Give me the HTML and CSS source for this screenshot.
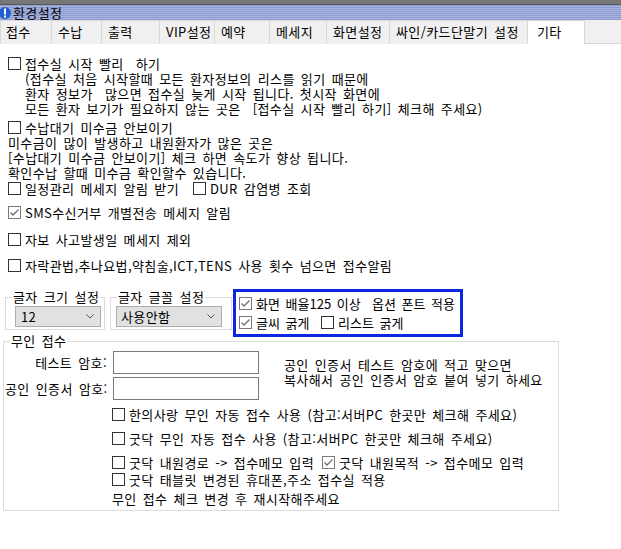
FILE: index.html
```html
<!DOCTYPE html>
<html lang="ko">
<head>
    <meta charset="UTF-8">
    <title>환경설정</title>
    <link rel="stylesheet" href="styles.css">
</head>
<body>
<div class="window">
    <div class="frame"></div>
    <div class="titlebar">
        <svg class="title-icon" viewBox="0 0 12 13" width="12" height="13">
            <circle cx="5" cy="7" r="6" fill="#1f5fd0"/>
            <rect x="4" y="2.5" width="2" height="6" fill="#fff"/>
            <rect x="4" y="9.5" width="2" height="2" fill="#fff"/>
        </svg>
        <span>환경설정</span>
    </div>

    <div class="tabs">
        <div class="tab first">접수</div>
        <div class="tab">수납</div>
        <div class="tab">출력</div>
        <div class="tab">VIP설정</div>
        <div class="tab">예약</div>
        <div class="tab">메세지</div>
        <div class="tab">화면설정</div>
        <div class="tab">싸인/카드단말기 설정</div>
        <div class="tab active">기타</div>
        <div class="tab-rest"></div>
    </div>

    <div class="page">
        <div class="check-row row-fast"><span class="cb"></span>접수실 시작 빨리&nbsp; 하기</div>
        <div class="note note-fast">
            (접수실 처음 시작할때 모든 환자정보의 리스를 읽기 때문에<br>
            환자 정보가&nbsp; 많으면 접수실 늦게 시작 됩니다. 첫시작 화면에<br>
            모든 환자 보기가 필요하지 않는 곳은&nbsp; [접수실 시작 빨리 하기] 체크해 주세요)
        </div>

        <div class="check-row row-unpaid"><span class="cb"></span>수납대기 미수금 안보이기</div>
        <div class="note note-unpaid">
            미수금이 많이 발생하고 내원환자가 많은 곳은<br>
            [수납대기 미수금 안보이기] 체크 하면 속도가 향상 됩니다.<br>
            확인수납 할때 미수금 확인할수 있습니다.
        </div>

        <div class="pair-row row-schedule">
            <div class="check-row"><span class="cb"></span>일정관리 메세지 알림 받기</div>
            <div class="check-row"><span class="cb"></span>DUR 감염병 조회</div>
        </div>
        <div class="check-row row-sms"><span class="cb on"><svg viewBox="0 0 11 11" width="11" height="11"><path d="M1.5 5.5 L4 8 L9.5 2.5" fill="none" stroke="#6e6e6e" stroke-width="1.3"/></svg></span>SMS수신거부 개별전송 메세지 알림</div>
        <div class="check-row row-accident"><span class="cb"></span>자보 사고발생일 메세지 제외</div>
        <div class="check-row row-count"><span class="cb"></span>자락관법,추나요법,약침술,ICT,TENS 사용 횟수 넘으면 접수알림</div>

        <div class="settings">
            <div class="group size-group">
                <span class="group-title">글자 크기 설정</span>
                <div class="combo"><span>12</span><svg viewBox="0 0 8 5" width="8" height="5"><path d="M0.5 0.5 L4 4 L7.5 0.5" fill="none" stroke="#555" stroke-width="1"/></svg></div>
            </div>
            <div class="group font-group">
                <span class="group-title">글자 글꼴 설정</span>
                <div class="combo"><span>사용안함</span><svg viewBox="0 0 8 5" width="8" height="5"><path d="M0.5 0.5 L4 4 L7.5 0.5" fill="none" stroke="#555" stroke-width="1"/></svg></div>
            </div>
            <div class="highlight">
                <div class="check-row"><span class="cb on"><svg viewBox="0 0 11 11" width="11" height="11"><path d="M1.5 5.5 L4 8 L9.5 2.5" fill="none" stroke="#6e6e6e" stroke-width="1.3"/></svg></span>화면 배율125 이상&nbsp; 옵션 폰트 적용</div>
                <div class="pair-row bold-row">
                    <div class="check-row"><span class="cb on"><svg viewBox="0 0 11 11" width="11" height="11"><path d="M1.5 5.5 L4 8 L9.5 2.5" fill="none" stroke="#6e6e6e" stroke-width="1.3"/></svg></span>글씨 굵게</div>
                    <div class="check-row"><span class="cb"></span>리스트 굵게</div>
                </div>
            </div>
        </div>

        <div class="group kiosk">
            <span class="group-title">무인 접수</span>
            <div class="auth">
                <label class="auth-label">테스트 암호:</label>
                <div class="input"></div>
                <div class="auth-note">공인 인증서 테스트 암호에 적고 맞으면<br>복사해서 공인 인증서 암호 붙여 넣기 하세요</div>
                <label class="auth-label">공인 인증서 암호:</label>
                <div class="input"></div>
            </div>
            <div class="check-row k1"><span class="cb"></span>한의사랑 무인 자동 접수 사용 (참고:서버PC 한곳만 체크해 주세요)</div>
            <div class="check-row k2"><span class="cb"></span>굿닥 무인 자동 접수 사용 (참고:서버PC 한곳만 체크해 주세요)</div>
            <div class="pair-row k3">
                <div class="check-row"><span class="cb"></span>굿닥 내원경로 -&gt; 접수메모 입력</div>
                <div class="check-row"><span class="cb on"><svg viewBox="0 0 11 11" width="11" height="11"><path d="M1.5 5.5 L4 8 L9.5 2.5" fill="none" stroke="#6e6e6e" stroke-width="1.3"/></svg></span>굿닥 내원목적 -&gt; 접수메모 입력</div>
            </div>
            <div class="check-row k4"><span class="cb"></span>굿닥 태블릿 변경된 휴대폰,주소 접수실 적용</div>
            <div class="kiosk-note">무인 접수 체크 변경 후 재시작해주세요</div>
        </div>
    </div>
</div>
</body>
</html>
```

FILE: styles.css
```css
* { box-sizing: border-box; }
body {
    margin: 0;
    font-family: "Noto Sans CJK KR", "Noto Sans", sans-serif;
    font-size: 13px;
    line-height: 15px;
    letter-spacing: 0.4px;
    word-spacing: 2px;
    color: #000;
    background: #fff;
}
.window { width: 621px; height: 549px; overflow: hidden; background: #fff; }

/* window chrome */
.frame { height: 5px; background: #777; border-bottom: 1px solid #5c5c5c; }
.titlebar {
    height: 15px;
    display: flex;
    align-items: center;
    background: repeating-linear-gradient(#8c9bd0 0 1px, #a9b4df 1px 2px);
}
.title-icon { display: block; margin-right: 1px; }

.tabs {
    display: grid;
    grid-template-columns: 52px 50px 58px 55px 55px 57px 63px 138px 57px 1fr;
    height: 24px;
    background: #f0f0f0;
    border-bottom: 1px solid #d9d9d9;
}
.tab {
    padding-left: 6px;
    line-height: 22px;
    background: #f0f0f0;
    border-top: 1px solid #d9d9d9;
    border-right: 1px solid #d9d9d9;
    white-space: nowrap;
}
.tab.first { border-left: 1px solid #d9d9d9; padding-left: 5px; }
.tab.active { background: #fff; height: 24px; padding-left: 9px; }

/* checkboxes */
.check-row { display: flex; align-items: center; height: 15px; white-space: nowrap; }
.cb {
    width: 13px;
    height: 13px;
    border: 1px solid #333;
    background: #fff;
    margin-right: 4px;
    flex: none;
    display: flex;
    align-items: center;
    justify-content: center;
}
.cb.on { border-color: #7a7a7a; }
.cb svg { display: block; }
.pair-row { display: grid; align-items: center; }

.page { padding-top: 12px; }
.page > .check-row, .page > .pair-row { margin-left: 8px; }
.note { white-space: nowrap; }
.note-fast { margin-left: 25px; }
.row-unpaid { margin-top: 4px; }
.note-unpaid { margin-left: 8px; }
.row-schedule { margin-top: 1px; grid-template-columns: 185px auto; }
.row-sms { margin-top: 9px; }
.row-accident { margin-top: 12px; }
.row-count { margin-top: 11px; }

/* font settings row */
.settings { display: flex; align-items: flex-start; margin-top: 16px; }
.group { border: 1px solid #dcdcdc; position: relative; }
.group-title {
    position: absolute;
    top: -9px;
    left: 6px;
    padding: 0 1px;
    background: #fff;
    white-space: nowrap;
}
.size-group { margin: 8px 0 0 5px; width: 100px; height: 33px; }
.font-group { margin: 8px 0 0 5px; width: 122px; height: 33px; }
.combo {
    display: flex;
    align-items: center;
    justify-content: space-between;
    height: 21px;
    margin-top: 8px;
    padding: 0 6px 0 5px;
    background: #e1e1e1;
    border: 1px solid #adadad;
}
.combo svg { display: block; }
.size-group .combo { margin-left: 9px; width: 86px; }
.font-group .combo { margin-left: 5px; width: 106px; padding-left: 4px; }

.highlight {
    margin-left: 1px;
    width: 230px;
    height: 48px;
    border: 3px solid #0b27e2;
    padding: 4px 0 0 3px;
    letter-spacing: 0;
}
.bold-row { margin-top: 4px; grid-template-columns: 82px auto; }

/* kiosk group */
.kiosk { margin: 4px 0 0 3px; width: 556px; height: 170px; }
.auth {
    display: grid;
    grid-template-columns: 102px 146px auto;
    grid-template-rows: 23px 23px;
    column-gap: 6px;
    row-gap: 3px;
    margin: 9px 0 0 1px;
}
.auth-label { text-align: right; align-self: center; white-space: nowrap; }
.input { border: 1px solid #7a7a7a; background: #fff; }
.auth-note {
    grid-column: 3;
    grid-row: 1 / span 2;
    margin: 6px 0 0 19px;
    white-space: nowrap;
}
.kiosk > .check-row, .kiosk > .pair-row, .kiosk-note { margin-left: 108px; }
.k1 { margin-top: 7px; }
.k2 { margin-top: 9px; }
.k3 { margin-top: 9px; grid-template-columns: 210px auto; }
.k4 { margin-top: 2px; }
.kiosk-note { margin-top: 4px; white-space: nowrap; }
```
